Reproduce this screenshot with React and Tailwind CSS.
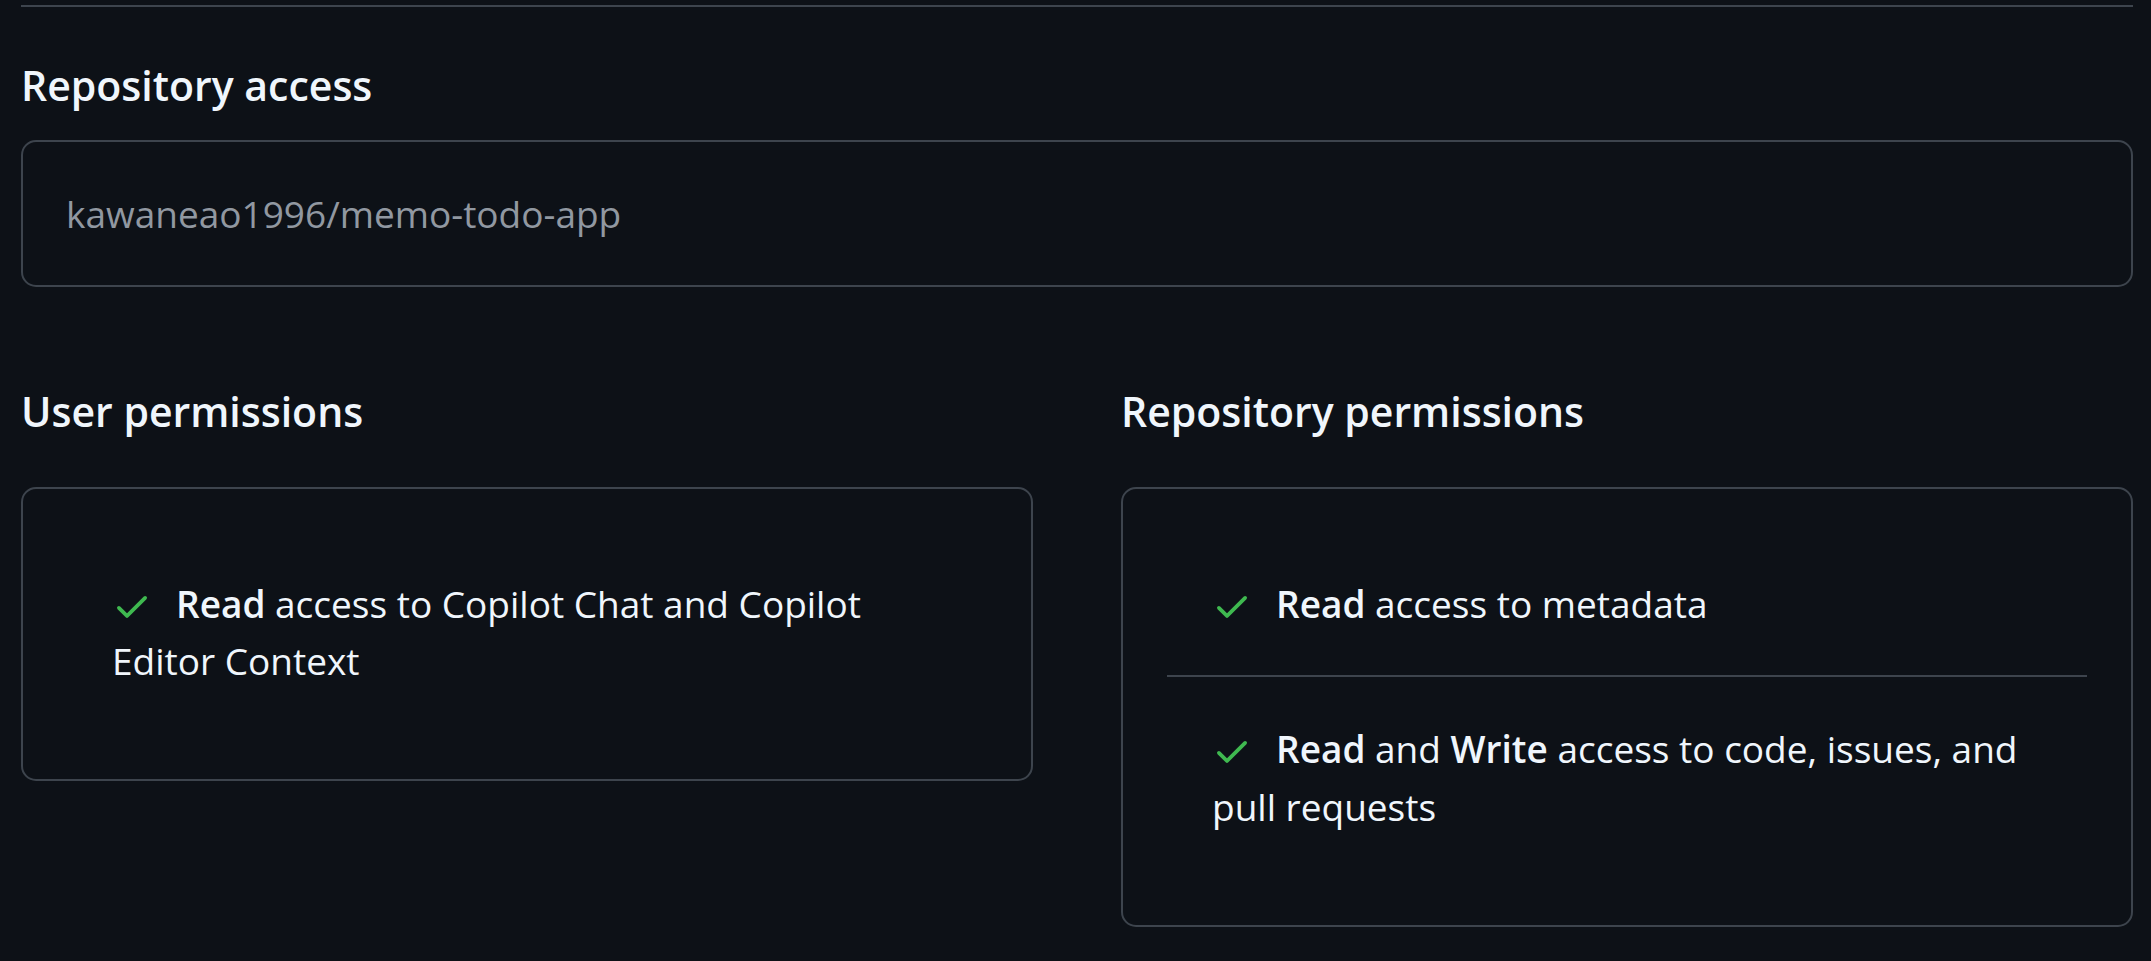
import React from "react";

function Check() {
  return (
    <svg
      viewBox="0 0 16 16"
      width="40"
      height="40"
      className="inline-block align-[-8px] mr-[24px] fill-[#3fb950]"
    >
      <path d="M13.78 4.22a.75.75 0 0 1 0 1.06l-7.25 7.25a.75.75 0 0 1-1.06 0L2.22 9.28a.751.751 0 0 1 .018-1.042.751.751 0 0 1 1.042-.018L6 10.94l6.72-6.72a.75.75 0 0 1 1.06 0Z" />
    </svg>
  );
}

function PermissionBox({ items }) {
  return (
    <ul className="border-2 border-[#3d444d] rounded-[15px] px-[44px] pt-[43px] pb-[46px]">
      {items.map((item, i) => (
        <li
          key={i}
          className={
            "px-[45px] py-[43px] text-[37px] leading-[57.7px] text-[#f0f6fc]" +
            (i > 0 ? " border-t-2 border-[#3d444d]" : "")
          }
        >
          <Check />
          {item}
        </li>
      ))}
    </ul>
  );
}

function App() {
  const userPerms = [
    <>
      <strong className="font-semibold">Read</strong> access to Copilot Chat and
      Copilot Editor Context
    </>,
  ];

  const repoPerms = [
    <>
      <strong className="font-semibold">Read</strong> access to metadata
    </>,
    <>
      <strong className="font-semibold">Read</strong> and{" "}
      <strong className="font-semibold">Write</strong> access to code, issues,
      and pull requests
    </>,
  ];

  return (
    <div className="min-h-screen bg-[#0d1117] pl-[21px] pr-[18px] pt-[5px] font-['Open_Sans',sans-serif]">
      <div className="h-[2px] bg-[#3d444d]" />

      <h2 className="mt-[50px] text-[41px] leading-[56px] font-semibold text-[#f0f6fc]">
        Repository access
      </h2>
      <div className="mt-[27px] border-2 border-[#3d444d] rounded-[15px] px-[43px] pt-[43px] pb-[42px]">
        <p className="text-[37px] leading-[57.7px] text-[#9198a1]">
          kawaneao1996/memo-todo-app
        </p>
      </div>

      <div className="grid grid-cols-2 gap-x-[88px] mt-[96px] items-start">
        <section>
          <h2 className="text-[41px] leading-[56px] font-semibold text-[#f0f6fc]">
            User permissions
          </h2>
          <div className="mt-[48px]">
            <PermissionBox items={userPerms} />
          </div>
        </section>
        <section>
          <h2 className="text-[41px] leading-[56px] font-semibold text-[#f0f6fc]">
            Repository permissions
          </h2>
          <div className="mt-[48px]">
            <PermissionBox items={repoPerms} />
          </div>
        </section>
      </div>
    </div>
  );
}

export default App;
